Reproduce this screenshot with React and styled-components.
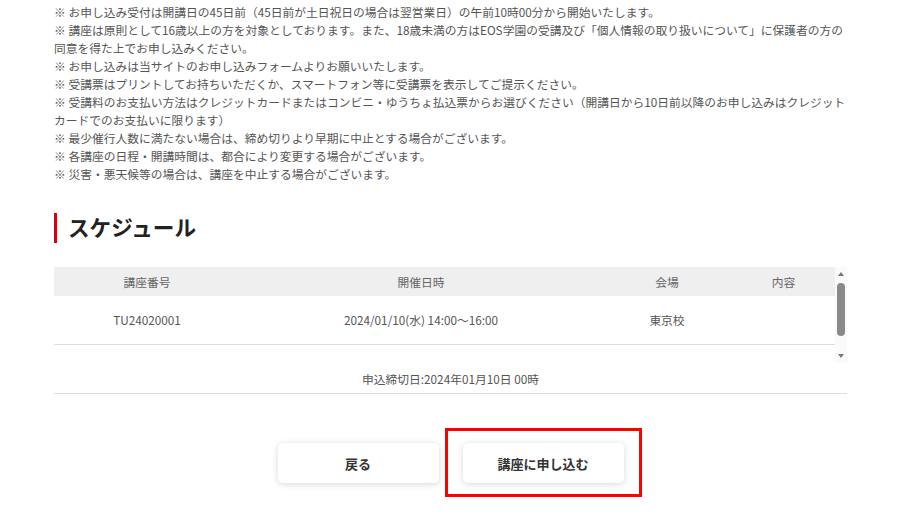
import React from "react";
import styled, { createGlobalStyle } from "styled-components";

const GlobalStyle = createGlobalStyle`
  html, body {
    margin: 0;
    padding: 0;
    background-color: #FFFFFF;
  }

  body {
    font-family: "Noto Sans CJK JP", "Noto Sans", sans-serif;
    color: #555555;
  }
`;

const PageContainer = styled.div`
  width: 793px;
  margin-left: 54px;
  padding-top: 3px;
  padding-bottom: 40px;
  display: flex;
  flex-direction: column;
`;

//NOTAS
const NotesList = styled.ul`
  list-style: none;
  margin: 0;
  padding: 0;
  font-size: 11.75px;
  line-height: 18px;
  color: #555555;
`;

const NoteItem = styled.li`
  margin: 0;
`;

//TITULO
const SectionTitle = styled.h2`
  margin: 30px 0 0 0;
  height: 30px;
  display: flex;
  align-items: center;
  border-left: 3px solid #D7000F;
  padding-left: 11px;
  font-size: 21.6px;
  font-weight: 700;
  color: #222222;
  line-height: 30px;
  padding-bottom: 3px;
  box-sizing: border-box;
`;

//TABLA
const ScheduleBox = styled.div`
  margin-top: 24px;
  display: flex;
  flex-direction: column;
  border-bottom: 1px solid #DDDDDD;
`;

const TableRow = styled.div`
  display: flex;
  height: 96px;
`;

const TableScroll = styled.div`
  flex: 1;
  overflow: hidden;
`;

//SCROLLBAR
const ScrollBar = styled.div`
  width: 12px;
  display: flex;
  flex-direction: column;
  background-color: #FAFAFA;
`;

const ScrollArrow = styled.div`
  height: 14px;
  display: flex;
  align-items: center;
  justify-content: center;

  &::before {
    content: "";
    width: 0;
    height: 0;
    border-left: 3px solid transparent;
    border-right: 3px solid transparent;
    ${props => props.down
      ? "border-top: 4px solid #777777;"
      : "border-bottom: 4px solid #777777;"}
  }
`;

const ScrollTrack = styled.div`
  flex: 1;
  padding: 2px 2px;
`;

const ScrollThumb = styled.div`
  height: 53px;
  border-radius: 4px;
  background-color: #8A8A8A;
`;

const ScheduleTable = styled.table`
  border-collapse: collapse;
  width: 100%;
  table-layout: fixed;
  font-size: 11.75px;
  color: #555555;

  & > thead > tr {
    height: 29px;
    background-color: #EFEFEF;
  }

  & > tbody > tr {
    height: 48px;
    border-bottom: 1px solid #DDDDDD;
  }
`;

const Th = styled.th`
  width: ${props => props.w}px;
  font-weight: 400;
  color: #666666;
  text-align: center;
  padding: 0;
`;

const Td = styled.td`
  text-align: center;
  padding: 0;
`;

const Deadline = styled.div`
  height: 30px;
  display: flex;
  align-items: center;
  justify-content: center;
  font-size: 11.75px;
  color: #555555;
`;

//BOTONES
const ButtonRow = styled.div`
  margin-top: 49px;
  display: flex;
  justify-content: center;
  gap: 24px;
`;

const Highlight = styled.div`
  position: relative;

  &::after {
    content: "";
    position: absolute;
    left: -18px;
    right: -18px;
    top: -15px;
    bottom: -14px;
    border: 3px solid #FF0000;
    pointer-events: none;
  }
`;

const WhiteButton = styled.button`
  width: 161px;
  height: 40px;
  border: none;
  border-radius: 5px;
  background-color: #FFFFFF;
  box-shadow: 0px 1px 6px rgba(0, 0, 0, 0.16);
  font-family: "Noto Sans CJK JP", sans-serif;
  font-size: 13px;
  font-weight: 700;
  color: #333333;
  cursor: pointer;
`;

const notas = [
  "※ お申し込み受付は開講日の45日前（45日前が土日祝日の場合は翌営業日）の午前10時00分から開始いたします。",
  "※ 講座は原則として16歳以上の方を対象としております。また、18歳未満の方はEOS学園の受講及び「個人情報の取り扱いについて」に保護者の方の同意を得た上でお申し込みください。",
  "※ お申し込みは当サイトのお申し込みフォームよりお願いいたします。",
  "※ 受講票はプリントしてお持ちいただくか、スマートフォン等に受講票を表示してご提示ください。",
  "※ 受講料のお支払い方法はクレジットカードまたはコンビニ・ゆうちょ払込票からお選びください（開講日から10日前以降のお申し込みはクレジットカードでのお支払いに限ります）",
  "※ 最少催行人数に満たない場合は、締め切りより早期に中止とする場合がございます。",
  "※ 各講座の日程・開講時間は、都合により変更する場合がございます。",
  "※ 災害・悪天候等の場合は、講座を中止する場合がございます。",
];

const columnas = [
  { titulo: "講座番号", w: 186 },
  { titulo: "開催日時", w: 362 },
  { titulo: "会場", w: 130 },
  { titulo: "内容", w: 103 },
];

const App = () => {
  return (
    <>
      <GlobalStyle />
      <PageContainer>
        <NotesList>
          {
            notas.map((v, i) => (
              <NoteItem key={i}>{v}</NoteItem>
            ))
          }
        </NotesList>

        <SectionTitle>スケジュール</SectionTitle>

        <ScheduleBox>
          <TableRow>
            <TableScroll>
              <ScheduleTable>
                <thead>
                  <tr>
                    {
                      columnas.map((v, i) => (
                        <Th key={i} w={v.w}>{v.titulo}</Th>
                      ))
                    }
                  </tr>
                </thead>
                <tbody>
                  <tr>
                    <Td>TU24020001</Td>
                    <Td>2024/01/10(水) 14:00〜16:00</Td>
                    <Td>東京校</Td>
                    <Td></Td>
                  </tr>
                </tbody>
              </ScheduleTable>
            </TableScroll>
            <ScrollBar>
              <ScrollArrow />
              <ScrollTrack>
                <ScrollThumb />
              </ScrollTrack>
              <ScrollArrow down />
            </ScrollBar>
          </TableRow>
          <Deadline>申込締切日:2024年01月10日 00時</Deadline>
        </ScheduleBox>

        <ButtonRow>
          <WhiteButton>戻る</WhiteButton>
          <Highlight>
            <WhiteButton>講座に申し込む</WhiteButton>
          </Highlight>
        </ButtonRow>
      </PageContainer>
    </>
  );
};

export default App;
